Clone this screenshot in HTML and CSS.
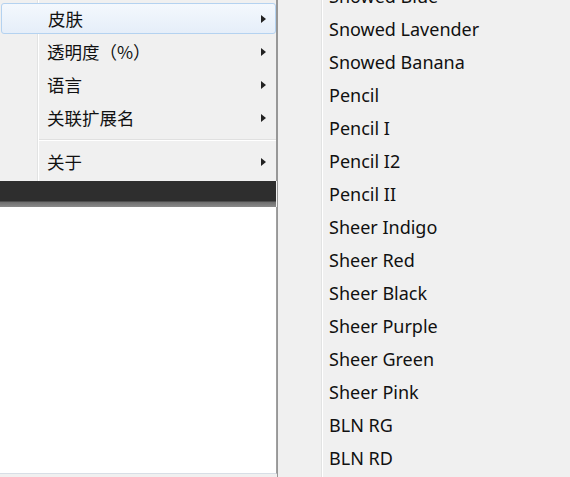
FILE: index.html
```html
<!DOCTYPE html>
<html lang="zh-cn">
<head>
    <meta charset="UTF-8">
    <title>菜单</title>
    <link rel="stylesheet" href="styles.css">
</head>
<body>
    <div class="screen">
        <div class="left">
            <ul class="menu">
                <li class="item active"><span class="label">皮肤</span><span class="arrow"></span></li>
                <li class="item"><span class="label">透明度（%）</span><span class="arrow"></span></li>
                <li class="item"><span class="label">语言</span><span class="arrow"></span></li>
                <li class="item"><span class="label">关联扩展名</span><span class="arrow"></span></li>
                <li class="sep"></li>
                <li class="item"><span class="label">关于</span><span class="arrow"></span></li>
            </ul>
            <div class="titlebar"></div>
            <div class="pane"></div>
        </div>
        <ul class="submenu">
            <li class="sub-item">Snowed Blue</li>
            <li class="sub-item">Snowed Lavender</li>
            <li class="sub-item">Snowed Banana</li>
            <li class="sub-item">Pencil</li>
            <li class="sub-item">Pencil I</li>
            <li class="sub-item">Pencil I2</li>
            <li class="sub-item">Pencil II</li>
            <li class="sub-item">Sheer Indigo</li>
            <li class="sub-item">Sheer Red</li>
            <li class="sub-item">Sheer Black</li>
            <li class="sub-item">Sheer Purple</li>
            <li class="sub-item">Sheer Green</li>
            <li class="sub-item">Sheer Pink</li>
            <li class="sub-item">BLN RG</li>
            <li class="sub-item">BLN RD</li>
        </ul>
    </div>
</body>
</html>
```

FILE: styles.css
```css
* {
    margin: 0;
    padding: 0;
    box-sizing: border-box;
}
body {
    width: 570px;
    height: 477px;
    overflow: hidden;
    background: #f0f0f0;
    font-family: "Noto Sans", "Noto Sans CJK SC", sans-serif;
    font-size: 18px;
    color: #111;
}
ul {
    list-style: none;
}
.screen {
    display: flex;
    height: 477px;
}
.left {
    width: 277px;
    display: flex;
    flex-direction: column;
}
.menu {
    background: #f0f0f0 linear-gradient(to right, transparent 37px, #e2e3e3 37px, #e2e3e3 38px, #fff 38px, #fff 39px, transparent 39px);
    border-right: 1px solid #979797;
    padding: 2px 0;
    height: 181px;
}
.item {
    height: 33px;
    display: flex;
    align-items: center;
    padding: 0 10px 0 47px;
    font-family: "Noto Sans CJK SC", sans-serif;
    font-size: 17.5px;
}
.item.active {
    margin: 1px 0 1px 1px;
    height: 31px;
    border: 1px solid #b4d2f0;
    border-radius: 3px;
    background: linear-gradient(#f4f8fd, #e5eef9);
    padding-left: 46px;
    padding-right: 9px;
}
.label {
    flex: 1;
}
.arrow {
    width: 0;
    height: 0;
    border-left: 5px solid #222;
    border-top: 4px solid transparent;
    border-bottom: 4px solid transparent;
}
.sep {
    height: 11px;
    margin-left: 39px;
    background: linear-gradient(transparent 5px, #e0e0e0 5px, #e0e0e0 6px, #fff 6px, #fff 7px, transparent 7px);
}
.titlebar {
    height: 26px;
    background: linear-gradient(#2e2e2e 0, #2e2e2e 20px, #6e6e6e 21px, #8a8a8a 26px);
    border-right: 1px solid #f0f0f0;
}
.pane {
    flex: 1;
    background: #fff;
    border-right: 1px solid #a0a0a0;
    border-bottom: 1px solid #d8dee6;
    margin-bottom: 3px;
}
.submenu {
    flex: 1;
    margin-top: -21px;
    border-left: 1px solid #979797;
    background: #f0f0f0 linear-gradient(to right, transparent 43px, #e2e3e3 43px, #e2e3e3 44px, #fff 44px, #fff 45px, transparent 45px);
    height: 498px;
}
.sub-item {
    height: 33px;
    display: flex;
    align-items: center;
    padding-left: 51px;
}
```
